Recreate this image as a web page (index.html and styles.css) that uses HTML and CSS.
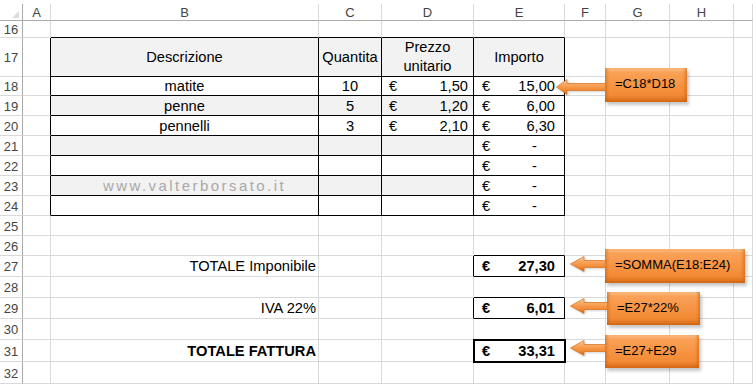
FILE: index.html
```html
<!DOCTYPE html>
<html lang="it">
<head>
<meta charset="utf-8">
<title>Fattura</title>
<link rel="stylesheet" href="styles.css">
</head>
<body>
<div class="sheet">
  <div class="row hdr">
    <div class="c corner"><span class="tri"></span></div>
    <div class="c">A</div><div class="c">B</div><div class="c">C</div><div class="c">D</div><div class="c">E</div><div class="c">F</div><div class="c">G</div><div class="c">H</div><div class="c"></div>
  </div>
  <div class="row r16">
    <div class="c rh">16</div>
    <div class="c"></div><div class="c tt"></div><div class="c tt"></div><div class="c tt"></div><div class="c tt"></div><div class="c"></div><div class="c"></div><div class="c"></div><div class="c"></div>
  </div>
  <div class="row r17">
    <div class="c rh bot">17</div>
    <div class="c tl"></div>
    <div class="c t g ctr">Descrizione</div>
    <div class="c t g ctr">Quantita</div>
    <div class="c t g ctr wrap">Prezzo unitario</div>
    <div class="c t g ctr">Importo</div>
    <div class="c"></div><div class="c"></div><div class="c"></div><div class="c"></div>
  </div>
  <div class="row r20">
    <div class="c rh">18</div>
    <div class="c tl"></div>
    <div class="c t ctr">matite</div>
    <div class="c t ctr">10</div>
    <div class="c t money md"><span>€</span><span>1,50</span></div>
    <div class="c t money me"><span>€</span><span>15,00</span></div>
    <div class="c"></div><div class="c"></div><div class="c"></div><div class="c"></div>
  </div>
  <div class="row r20">
    <div class="c rh">19</div>
    <div class="c tl"></div>
    <div class="c t g ctr">penne</div>
    <div class="c t g ctr">5</div>
    <div class="c t g money md"><span>€</span><span>1,20</span></div>
    <div class="c t money me"><span>€</span><span>6,00</span></div>
    <div class="c"></div><div class="c"></div><div class="c"></div><div class="c"></div>
  </div>
  <div class="row r20">
    <div class="c rh">20</div>
    <div class="c tl"></div>
    <div class="c t ctr">pennelli</div>
    <div class="c t ctr">3</div>
    <div class="c t money md"><span>€</span><span>2,10</span></div>
    <div class="c t money me"><span>€</span><span>6,30</span></div>
    <div class="c"></div><div class="c"></div><div class="c"></div><div class="c"></div>
  </div>
  <div class="row r20">
    <div class="c rh">21</div>
    <div class="c tl"></div>
    <div class="c t g"></div>
    <div class="c t g"></div>
    <div class="c t g"></div>
    <div class="c t money mz"><span>€</span><span>-</span></div>
    <div class="c"></div><div class="c"></div><div class="c"></div><div class="c"></div>
  </div>
  <div class="row r20">
    <div class="c rh">22</div>
    <div class="c tl"></div>
    <div class="c t"></div>
    <div class="c t"></div>
    <div class="c t"></div>
    <div class="c t money mz"><span>€</span><span>-</span></div>
    <div class="c"></div><div class="c"></div><div class="c"></div><div class="c"></div>
  </div>
  <div class="row r20">
    <div class="c rh">23</div>
    <div class="c tl"></div>
    <div class="c t g ctr"><span class="wm">www.valterborsato.it</span></div>
    <div class="c t g"></div>
    <div class="c t g"></div>
    <div class="c t money mz"><span>€</span><span>-</span></div>
    <div class="c"></div><div class="c"></div><div class="c"></div><div class="c"></div>
  </div>
  <div class="row r20">
    <div class="c rh">24</div>
    <div class="c tl"></div>
    <div class="c t"></div>
    <div class="c t"></div>
    <div class="c t"></div>
    <div class="c t money mz"><span>€</span><span>-</span></div>
    <div class="c"></div><div class="c"></div><div class="c"></div><div class="c"></div>
  </div>
  <div class="row r20">
    <div class="c rh">25</div>
    <div class="c"></div><div class="c"></div><div class="c"></div><div class="c"></div><div class="c"></div><div class="c"></div><div class="c"></div><div class="c"></div><div class="c"></div>
  </div>
  <div class="row r20">
    <div class="c rh">26</div>
    <div class="c"></div><div class="c"></div><div class="c"></div><div class="c"></div><div class="c tt"></div><div class="c"></div><div class="c"></div><div class="c"></div><div class="c"></div>
  </div>
  <div class="row r21">
    <div class="c rh">27</div>
    <div class="c"></div>
    <div class="c lab">TOTALE Imponibile</div>
    <div class="c"></div>
    <div class="c br"></div>
    <div class="c t money me b"><span>€</span><span>27,30</span></div>
    <div class="c"></div><div class="c"></div><div class="c"></div><div class="c"></div>
  </div>
  <div class="row r21">
    <div class="c rh">28</div>
    <div class="c"></div><div class="c"></div><div class="c"></div><div class="c"></div><div class="c tt"></div><div class="c"></div><div class="c"></div><div class="c"></div><div class="c"></div>
  </div>
  <div class="row r21">
    <div class="c rh">29</div>
    <div class="c"></div>
    <div class="c lab">IVA 22%</div>
    <div class="c"></div>
    <div class="c br"></div>
    <div class="c t money me b"><span>€</span><span>6,01</span></div>
    <div class="c"></div><div class="c"></div><div class="c"></div><div class="c"></div>
  </div>
  <div class="row r21">
    <div class="c rh">30</div>
    <div class="c"></div><div class="c"></div><div class="c"></div><div class="c"></div><div class="c"></div><div class="c"></div><div class="c"></div><div class="c"></div><div class="c"></div>
  </div>
  <div class="row r22">
    <div class="c rh">31</div>
    <div class="c"></div>
    <div class="c lab b">TOTALE FATTURA</div>
    <div class="c"></div>
    <div class="c"></div>
    <div class="c thick money me b"><span>€</span><span>33,31</span></div>
    <div class="c"></div><div class="c"></div><div class="c"></div><div class="c"></div>
  </div>
  <div class="row r22">
    <div class="c rh">32</div>
    <div class="c"></div><div class="c"></div><div class="c"></div><div class="c"></div><div class="c"></div><div class="c"></div><div class="c"></div><div class="c"></div><div class="c"></div>
  </div>
  <div class="row r22">
    <div class="c rh"></div>
    <div class="c"></div><div class="c"></div><div class="c"></div><div class="c"></div><div class="c"></div><div class="c"></div><div class="c"></div><div class="c"></div><div class="c"></div>
  </div>

  <svg class="arrow a1" width="52" height="16" viewBox="0 0 52 16"><defs><linearGradient id="ag" x1="0" y1="0" x2="0" y2="1"><stop offset="0" stop-color="#fdd0a2"/><stop offset="0.35" stop-color="#f9a55e"/><stop offset="0.7" stop-color="#f28a32"/><stop offset="1" stop-color="#c8620f"/></linearGradient></defs><path d="M0.5 8 L11 0.5 L11 4.5 L52 4.5 L52 11.5 L11 11.5 L11 15.5 Z" fill="url(#ag)" stroke="#d9782a" stroke-width="0.8"/></svg>
  <svg class="arrow a2" width="37" height="16" viewBox="0 0 37 16"><path d="M0.5 8 L14 0.5 L14 4.5 L37 4.5 L37 11.5 L14 11.5 L14 15.5 Z" fill="url(#ag)" stroke="#d9782a" stroke-width="0.8"/></svg>
  <svg class="arrow a3" width="39" height="16" viewBox="0 0 39 16"><path d="M0.5 8 L14 0.5 L14 4.5 L39 4.5 L39 11.5 L14 11.5 L14 15.5 Z" fill="url(#ag)" stroke="#d9782a" stroke-width="0.8"/></svg>
  <svg class="arrow a4" width="37" height="16" viewBox="0 0 37 16"><path d="M0.5 8 L14 0.5 L14 4.5 L37 4.5 L37 11.5 L14 11.5 L14 15.5 Z" fill="url(#ag)" stroke="#d9782a" stroke-width="0.8"/></svg>

  <div class="box b1">=C18*D18</div>
  <div class="box b2">=SOMMA(E18:E24)</div>
  <div class="box b3">=E27*22%</div>
  <div class="box b4">=E27+E29</div>
</div>
</body>
</html>
```
FILE: styles.css
```css
html, body {
  margin: 0;
  padding: 0;
  background: #ffffff;
}
body {
  font-family: "Liberation Sans", Arial, sans-serif;
  font-size: 14.67px;
  color: #000;
  overflow: hidden;
}
.sheet {
  position: relative;
  width: 753px;
  height: 384px;
  overflow: hidden;
}
.row {
  display: grid;
  grid-template-columns: 23px 28px 268px 63px 92px 91px 41px 64px 64px 1fr;
}
.c {
  box-sizing: border-box;
  border-right: 1px solid #d9d9d9;
  border-bottom: 1px solid #d9d9d9;
  display: flex;
  align-items: center;
  white-space: nowrap;
  min-width: 0;
}
.hdr {
  height: 21px;
  padding-top: 4px;
  box-sizing: border-box;
}
.hdr .c {
  justify-content: center;
  font-size: 13px;
  color: #444;
  border-bottom-color: #ababab;
  border-right-color: #dadada;
  padding-top: 1px;
}
.hdr .corner {
  position: relative;
  border-right-color: #ababab;
}
.tri {
  position: absolute;
  right: 3px;
  bottom: 2px;
  width: 0;
  height: 0;
  border-left: 7px solid transparent;
  border-bottom: 7px solid #dcdcdc;
}
.r16 { height: 17px; }
.r17 { height: 38px; }
.r20 { height: 20px; }
.r21 { height: 21px; }
.r22 { height: 22px; }

.rh {
  justify-content: center;
  font-size: 13px;
  color: #444;
  border-right-color: #ababab;
  padding-top: 1px;
}
.tt { border-bottom-color: #000; }
.tl { border-right-color: #000; }
.br { border-right-color: #000; }
.t {
  border-right-color: #000;
  border-bottom-color: #000;
}
.g { background: #f2f2f2; }
.ctr {
  justify-content: center;
  text-align: center;
}
.wrap {
  white-space: normal;
  line-height: 19px;
  padding: 0 8px;
}
.money {
  justify-content: space-between;
}
.md { padding: 0 5px 0 7px; }
.me { padding: 0 9px 0 8px; }
.mz { padding: 0 27px 0 8px; }
.lab {
  justify-content: flex-end;
  padding-right: 2px;
}
.b { font-weight: bold; }
.thick {
  position: relative;
  z-index: 1;
  border-right-color: #000;
  border-bottom-color: #000;
  box-shadow: 0 0 0 1px #000, inset 1px 1px 0 #000;
}
.wm {
  color: #a9a9a9;
  font-size: 15px;
  letter-spacing: 2.45px;
  margin-left: 20px;
}

.arrow {
  position: absolute;
  z-index: 2;
  filter: drop-shadow(1px 1px 1px rgba(0,0,0,0.18));
}
.a1 { left: 556px; top: 79px; }
.a2 { left: 570px; top: 256px; }
.a3 { left: 570px; top: 298px; }
.a4 { left: 570px; top: 340px; }

.box {
  position: absolute;
  z-index: 3;
  box-sizing: border-box;
  display: flex;
  align-items: center;
  padding: 0 0 3px 10px;
  font-size: 13px;
  color: #000;
  background: linear-gradient(180deg, #fcc48f 0%, #f9a258 12%, #f79646 45%, #f28a35 80%, #d56a14 100%);
  box-shadow: inset 3px 0 3px -1px rgba(196, 92, 10, 0.55), inset -3px 0 3px -1px rgba(196, 92, 10, 0.55), 2px 3px 3px rgba(0,0,0,0.22);
}
.b1 { left: 605px; top: 68px; width: 82px; height: 34px; }
.b2 { left: 605px; top: 249px; width: 140px; height: 34px; }
.b3 { left: 607px; top: 292px; width: 93px; height: 33px; }
.b4 { left: 605px; top: 335px; width: 94px; height: 33px; }
```
